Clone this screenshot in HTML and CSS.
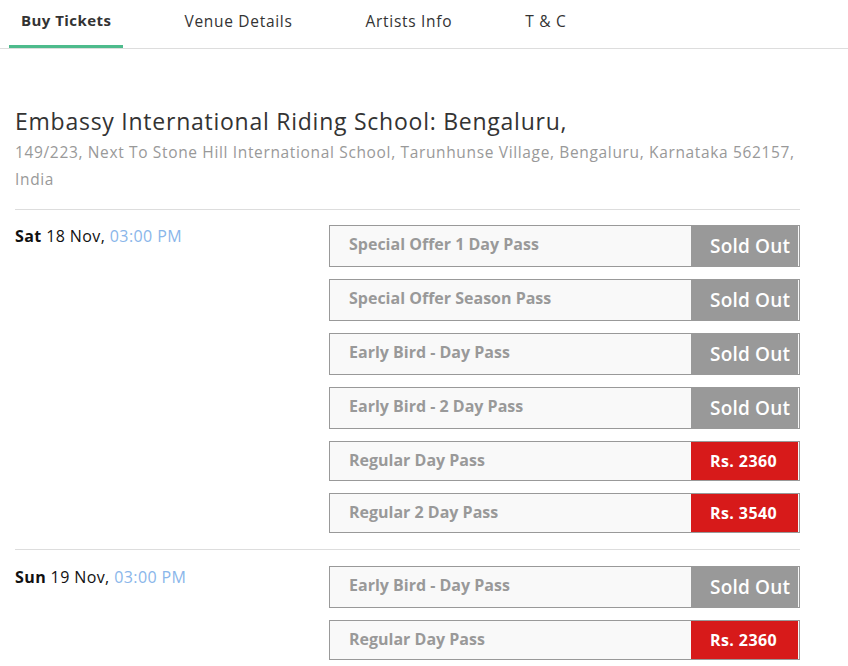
FILE: index.html
```html
<!DOCTYPE html>
<html lang="en">
<head>
    <meta charset="UTF-8">
    <title>Buy Tickets</title>
    <link rel="stylesheet" href="styles.css">
</head>
<body>
    <!-- Tabs -->
    <div class="tabs">
        <div class="tab active">Buy Tickets</div>
        <div class="tab">Venue Details</div>
        <div class="tab">Artists Info</div>
        <div class="tab">T &amp; C</div>
    </div>

    <div class="content">
        <div class="venue">
            <h2>Embassy International Riding School: Bengaluru,</h2>
            <p class="address">149/223, Next To Stone Hill International School, Tarunhunse Village, Bengaluru, Karnataka 562157, India</p>
        </div>

        <div class="show">
            <div class="show-date"><b>Sat</b> 18 Nov, <span class="time">03:00 PM</span></div>
            <div class="ticket-list">
                <div class="ticket"><span class="ticket-name">Special Offer 1 Day Pass</span><span class="badge sold">Sold Out</span></div>
                <div class="ticket"><span class="ticket-name">Special Offer Season Pass</span><span class="badge sold">Sold Out</span></div>
                <div class="ticket"><span class="ticket-name">Early Bird - Day Pass</span><span class="badge sold">Sold Out</span></div>
                <div class="ticket"><span class="ticket-name">Early Bird - 2 Day Pass</span><span class="badge sold">Sold Out</span></div>
                <div class="ticket"><span class="ticket-name">Regular Day Pass</span><span class="badge price">Rs. 2360</span></div>
                <div class="ticket"><span class="ticket-name">Regular 2 Day Pass</span><span class="badge price">Rs. 3540</span></div>
            </div>
        </div>

        <div class="show">
            <div class="show-date"><b>Sun</b> 19 Nov, <span class="time">03:00 PM</span></div>
            <div class="ticket-list">
                <div class="ticket"><span class="ticket-name">Early Bird - Day Pass</span><span class="badge sold">Sold Out</span></div>
                <div class="ticket"><span class="ticket-name">Regular Day Pass</span><span class="badge price">Rs. 2360</span></div>
            </div>
        </div>
    </div>
</body>
</html>
```

FILE: styles.css
```css
body {
    font-family: "Open Sans", Arial, sans-serif;
    margin: 0;
    color: #222;
    background: #fff;
}
.tabs {
    display: flex;
    padding-left: 9px;
    border-bottom: 1px solid #ddd;
    height: 48px;
}
.tab {
    font-size: 15.5px;
    letter-spacing: 0.7px;
    color: #333;
    padding: 10px 12px 0;
    margin-right: 49px;
    box-sizing: border-box;
}
.tab.active {
    font-weight: bold;
    font-size: 15px;
    letter-spacing: 0.45px;
    border-bottom: 3px solid #4dbb8c;
}
.content {
    width: 785px;
    margin-left: 15px;
    padding-top: 57px;
}
.venue h2 {
    font-size: 23px;
    letter-spacing: 0.75px;
    font-weight: normal;
    color: #333;
    margin: 0;
    line-height: 30px;
}
.address {
    font-size: 15.5px;
    letter-spacing: 0.65px;
    color: #999;
    line-height: 27px;
    margin: 3px 0 0;
}
.venue {
    padding-bottom: 16px;
}
.show {
    display: flex;
    border-top: 1px solid #ddd;
    padding: 15px 0 16px;
}
.show + .show {
    padding-top: 16px;
}
.show-date {
    width: 314px;
    font-size: 16px;
    letter-spacing: 0.4px;
    color: #111;
}
.time {
    color: #8ab6ea;
}
.ticket-list {
    flex: 1;
    display: flex;
    flex-direction: column;
    gap: 12px;
}
.ticket {
    display: flex;
    justify-content: space-between;
    border: 1px solid #999;
    background: #f9f9f9;
    padding-right: 1px;
}
.ticket-name {
    font-size: 16px;
    font-weight: bold;
    color: #999;
    padding: 7px 19px 0;
}
.badge {
    width: 107px;
    padding-left: 19px;
    color: #fff;
    box-sizing: border-box;
    white-space: nowrap;
}
.badge.sold {
    background: #999;
    font-size: 19px;
    font-weight: 600;
    letter-spacing: 0.2px;
    line-height: 40px;
}
.badge.price {
    background: #d71a1a;
    font-size: 16px;
    font-weight: bold;
    letter-spacing: 0.4px;
    line-height: 38px;
}
```
